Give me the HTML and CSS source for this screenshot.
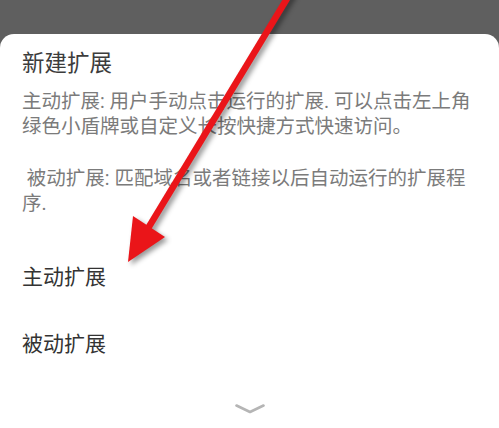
FILE: index.html
```html
<!DOCTYPE html>
<html lang="zh-CN">
<head>
<meta charset="utf-8">
<title>新建扩展</title>
<link rel="stylesheet" href="styles.css">
</head>
<body>
<div class="screen">
  <div class="sheet">
    <h1 class="title">新建扩展</h1>
    <p class="desc">主动扩展: 用户手动点击运行的扩展. 可以点击左上角绿色小盾牌或自定义长按快捷方式快速访问。</p>
    <p class="desc desc-second">&nbsp;被动扩展: 匹配域名或者链接以后自动运行的扩展程序.</p>
    <ul class="options">
      <li class="option">主动扩展</li>
      <li class="option">被动扩展</li>
    </ul>
    <div class="more">
      <svg class="chevron" width="30" height="10" viewBox="0 0 30 10"><polyline points="1.5,1.5 15,8 28.5,1.5" fill="none" stroke="#b5b5b5" stroke-width="2.6" stroke-linecap="round" stroke-linejoin="round"/></svg>
    </div>
  </div>
  <svg class="annotation" width="499" height="428" viewBox="0 0 499 428">
    <g class="arrow">
      <line x1="291" y1="-8" x2="147" y2="230" stroke="#ea1519" stroke-width="6.5"/>
      <polygon points="128,262 133,216 165,237" fill="#ea1519"/>
    </g>
  </svg>
</div>
</body>
</html>
```

FILE: styles.css
```css
html, body {
  margin: 0;
  padding: 0;
  height: 100%;
}
body {
  background: #5f5f5f;
  font-family: Roboto, "Noto Sans CJK SC", sans-serif;
  overflow: hidden;
}
.screen {
  position: relative;
  height: 100%;
  padding-top: 34px;
  box-sizing: border-box;
}
.sheet {
  background: #ffffff;
  border-radius: 14px 14px 0 0;
  height: 100%;
  padding: 14px 22px 0 22px;
  box-sizing: border-box;
}
.title {
  margin: 0;
  font-size: 22.5px;
  line-height: 30px;
  font-weight: normal;
  color: #3c3c3c;
}
.desc {
  margin: 12px 0 0 0;
  font-size: 19.5px;
  line-height: 24.5px;
  color: #7b7b7b;
}
.desc-second {
  margin-top: 28px;
}
.options {
  list-style: none;
  margin: 27px 0 0 0;
  padding: 0;
}
.option {
  font-size: 21px;
  line-height: 30px;
  padding: 18.5px 0;
  color: #333333;
}
.more {
  display: flex;
  justify-content: center;
  margin-top: 27px;
}
.chevron {
  display: block;
}
.annotation {
  position: absolute;
  left: 0;
  top: 0;
  pointer-events: none;
}
.arrow {
  filter: drop-shadow(3px 3px 2.5px rgba(0, 0, 0, 0.4));
}
```
